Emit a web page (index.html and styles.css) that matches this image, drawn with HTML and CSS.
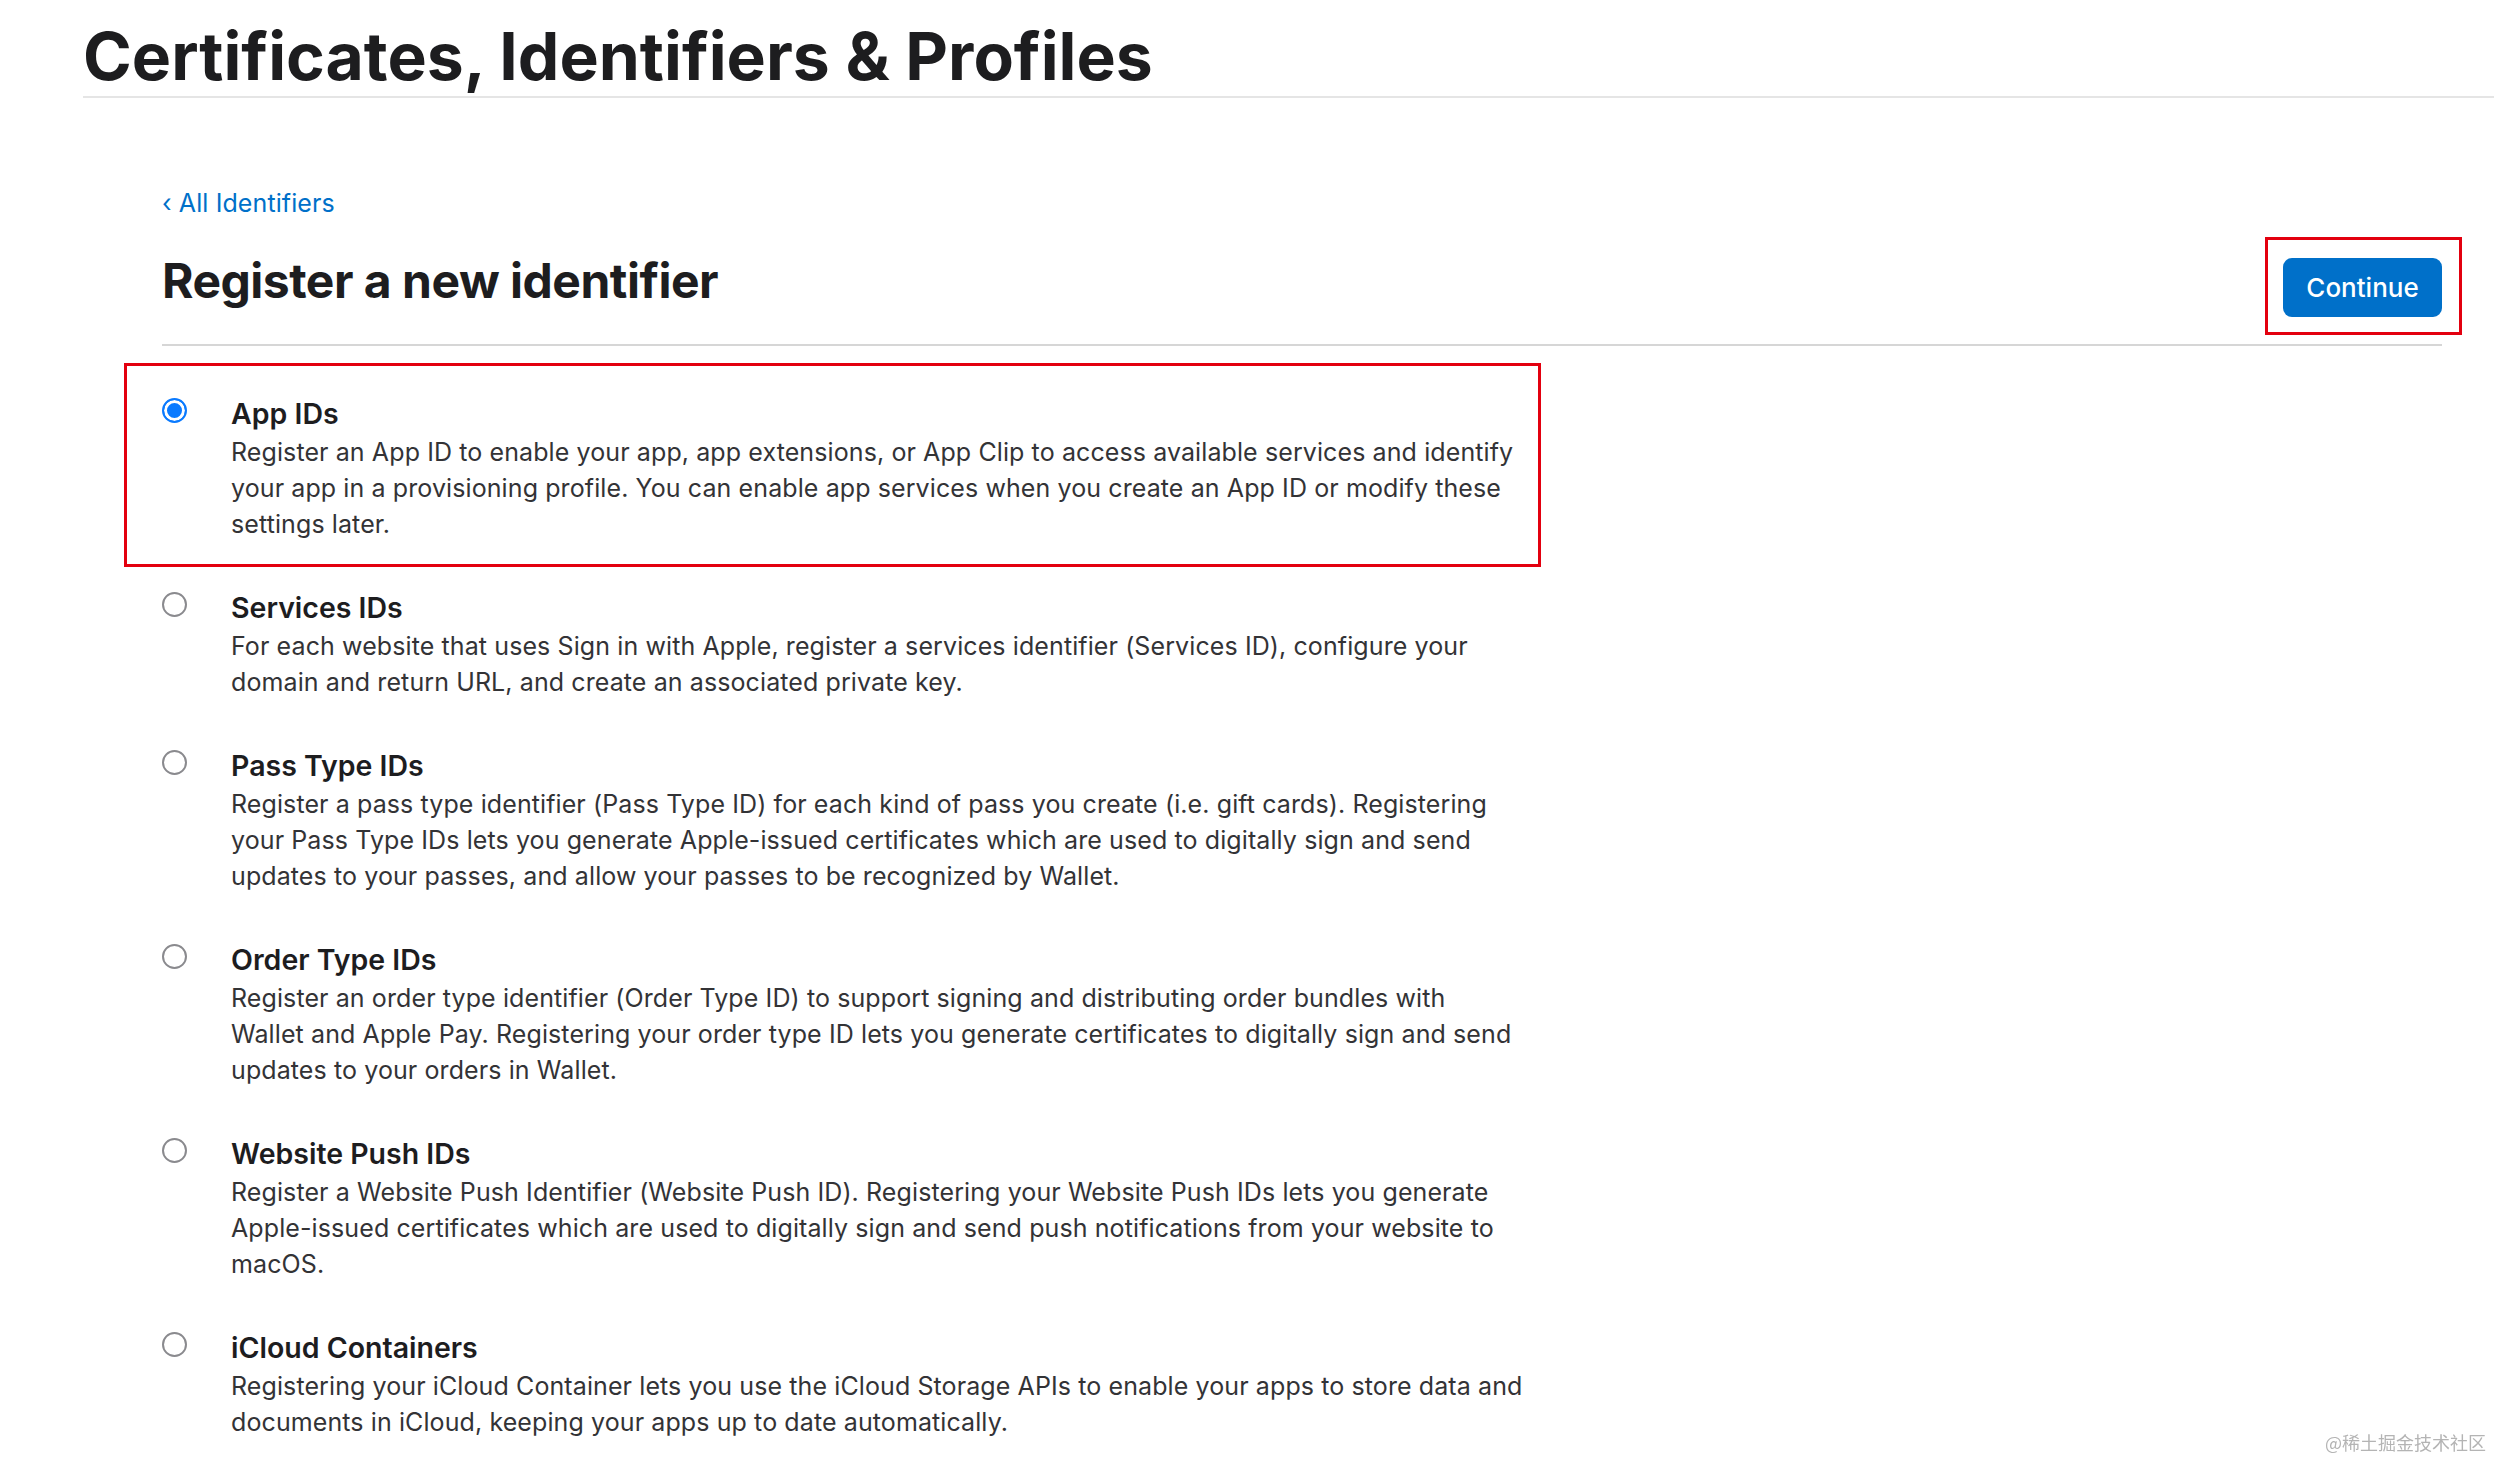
FILE: index.html
```html
<!DOCTYPE html>
<html lang="en">
<head>
    <meta charset="UTF-8">
    <title>Register a new identifier</title>
    <link rel="stylesheet" href="styles.css">
</head>
<body>
    <header class="site-header">
        <h1 class="site-title">Certificates, Identifiers &amp; Profiles</h1>
    </header>

    <main class="content">
        <a class="back-link" href="#">&lsaquo; All Identifiers</a>

        <div class="page-head">
            <h2 class="page-title">Register a new identifier</h2>
            <div class="action marked">
                <button class="btn-primary" type="button">Continue</button>
            </div>
        </div>

        <ul class="id-types">
            <li class="id-type marked">
                <input type="radio" name="idType" checked>
                <div class="id-text">
                    <h3>App IDs</h3>
                    <p>Register an App ID to enable your app, app extensions, or App Clip to access available services and identify<br>your app in a provisioning profile. You can enable app services when you create an App ID or modify these<br>settings later.</p>
                </div>
            </li>
            <li class="id-type">
                <input type="radio" name="idType">
                <div class="id-text">
                    <h3>Services IDs</h3>
                    <p>For each website that uses Sign in with Apple, register a services identifier (Services ID), configure your<br>domain and return URL, and create an associated private key.</p>
                </div>
            </li>
            <li class="id-type">
                <input type="radio" name="idType">
                <div class="id-text">
                    <h3>Pass Type IDs</h3>
                    <p>Register a pass type identifier (Pass Type ID) for each kind of pass you create (i.e. gift cards). Registering<br>your Pass Type IDs lets you generate Apple-issued certificates which are used to digitally sign and send<br>updates to your passes, and allow your passes to be recognized by Wallet.</p>
                </div>
            </li>
            <li class="id-type">
                <input type="radio" name="idType">
                <div class="id-text">
                    <h3>Order Type IDs</h3>
                    <p>Register an order type identifier (Order Type ID) to support signing and distributing order bundles with<br>Wallet and Apple Pay. Registering your order type ID lets you generate certificates to digitally sign and send<br>updates to your orders in Wallet.</p>
                </div>
            </li>
            <li class="id-type">
                <input type="radio" name="idType">
                <div class="id-text">
                    <h3>Website Push IDs</h3>
                    <p>Register a Website Push Identifier (Website Push ID). Registering your Website Push IDs lets you generate<br>Apple-issued certificates which are used to digitally sign and send push notifications from your website to<br>macOS.</p>
                </div>
            </li>
            <li class="id-type">
                <input type="radio" name="idType">
                <div class="id-text">
                    <h3>iCloud Containers</h3>
                    <p>Registering your iCloud Container lets you use the iCloud Storage APIs to enable your apps to store data and<br>documents in iCloud, keeping your apps up to date automatically.</p>
                </div>
            </li>
        </ul>
    </main>

    <div class="watermark">@稀土掘金技术社区</div>
</body>
</html>
```

FILE: styles.css
```css
body {
    margin: 0;
    font-family: Inter, "Noto Sans", sans-serif;
    color: #1d1d1f;
    background-color: #fff;
}

.site-header {
    margin-left: 83px;
    padding-top: 16px;
    border-bottom: 2px solid #e5e5e5;
}

.site-title {
    margin: 0;
    font-size: 66px;
    line-height: 80px;
    font-weight: 700;
}

.content {
    padding: 87px 52px 0 162px;
}

.back-link {
    display: block;
    font-size: 25px;
    line-height: 36px;
    color: #0070c9;
    text-decoration: none;
    letter-spacing: 0.1px;
}

.page-head {
    display: flex;
    justify-content: space-between;
    align-items: flex-start;
    margin-top: 31px;
    padding-bottom: 27px;
    border-bottom: 2px solid #d6d6d6;
}

.page-title {
    margin: 0;
    font-size: 48px;
    line-height: 58px;
    font-weight: 700;
    letter-spacing: -0.5px;
}

.action {
    margin-top: 6px;
}

.btn-primary {
    display: block;
    width: 159px;
    height: 59px;
    border: none;
    border-radius: 9px;
    background-color: #0070c9;
    color: #fff;
    font-family: Inter, sans-serif;
    font-size: 26px;
    font-weight: 500;
    cursor: pointer;
}

/* red annotation frames */
.marked {
    position: relative;
}

.marked::after {
    content: "";
    position: absolute;
    box-sizing: border-box;
    border: 3px solid #e3000f;
    pointer-events: none;
}

.action.marked::after {
    top: -21px;
    left: -18px;
    right: -20px;
    bottom: -18px;
}

.id-type.marked::after {
    top: -31px;
    left: -38px;
    width: 1417px;
    bottom: -25px;
}

.id-types {
    list-style-type: none;
    margin: 48px 0 0;
    padding: 0;
}

.id-type {
    display: flex;
    gap: 44px;
    margin-bottom: 46px;
}

.id-type input {
    appearance: none;
    flex: none;
    box-sizing: border-box;
    width: 25px;
    height: 25px;
    margin: 4px 0 0;
    border: 2px solid #8a8a8e;
    border-radius: 50%;
    background-color: #fff;
}

.id-type input:checked {
    border: 2.5px solid #0a7aff;
    background-color: #0a7aff;
    box-shadow: inset 0 0 0 3px #fff;
}

.id-text h3 {
    margin: 0;
    font-size: 28.5px;
    line-height: 40px;
    font-weight: 600;
}

.id-text p {
    margin: 0;
    font-size: 25px;
    line-height: 36px;
    color: #333336;
    letter-spacing: 0.1px;
}

.watermark {
    position: fixed;
    right: 8px;
    bottom: 3px;
    font-family: "Noto Sans CJK SC", sans-serif;
    font-size: 18px;
    color: #b4b4b4;
}
```
